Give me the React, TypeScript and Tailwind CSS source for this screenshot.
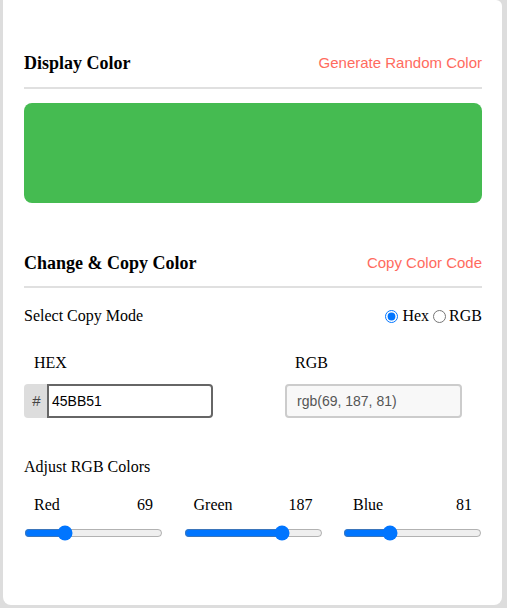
import React from "react";

export default function App() {
  const serif = { fontFamily: '"Liberation Serif", "Times New Roman", serif' };
  return (
    <div className="min-h-[608px] w-[507px] bg-[#dddddd]" style={serif}>
      <div className="mx-[3px] w-[499px] rounded-b-[8px] rounded-tr-[6px] bg-white pb-[64px] pl-[21px] pr-[20px] pt-[52px] text-black">
        <div className="flex items-center justify-between border-b-2 border-[#e0e0e0] pb-[13px]">
          <div className="h-[22px] text-[18px] font-bold leading-[22px]">Display Color</div>
          <div className="text-[15px] leading-[22px] text-[#ff6b5e]" style={{ fontFamily: '"Liberation Sans", Arial, sans-serif' }}>
            Generate Random Color
          </div>
        </div>
        <div className="mt-[14px] h-[100px] rounded-[8px] bg-[#45bb51]" />

        <div className="mt-[49px] flex items-center justify-between border-b-2 border-[#e0e0e0] pb-[12px]">
          <div className="h-[22px] text-[18px] font-bold leading-[22px]">Change &amp; Copy Color</div>
          <div className="text-[15px] leading-[22px] text-[#ff6b5e]" style={{ fontFamily: '"Liberation Sans", Arial, sans-serif' }}>
            Copy Color Code
          </div>
        </div>

        <div className="mt-[18px] flex h-[20px] items-center justify-between text-[16px] leading-[20px]">
          <div>Select Copy Mode</div>
          <div className="flex items-center">
            <input type="radio" name="mode" defaultChecked className="m-0 mr-[4px] h-[13px] w-[13px]" />
            <span>Hex</span>
            <input type="radio" name="mode" className="m-0 ml-[4px] mr-[3px] h-[13px] w-[13px]" />
            <span>RGB</span>
          </div>
        </div>

        <div className="mt-[27px] flex">
          <div className="w-[189px]">
            <div className="h-[20px] pl-[10px] text-[16px] leading-[20px]">HEX</div>
            <div className="mt-[11px] flex h-[34px]">
              <div className="flex w-[23px] items-center justify-center rounded-l-[4px] border-2 border-r-0 border-[#dddddd] bg-[#dddddd] text-[15px] text-[#444]" style={{ fontFamily: '"Liberation Sans", Arial, sans-serif' }}>
                #
              </div>
              <div className="flex flex-1 items-center rounded-r-[4px] border-2 border-[#666] pl-[3px] text-[14px] text-black" style={{ fontFamily: '"Liberation Sans", Arial, sans-serif' }}>
                45BB51
              </div>
            </div>
          </div>
          <div className="ml-[72px] w-[177px]">
            <div className="h-[20px] pl-[10px] text-[16px] leading-[20px]">RGB</div>
            <div className="mt-[11px] flex h-[34px] items-center rounded-[4px] border-2 border-[#cccccc] bg-[#f8f8f8] pl-[10px] text-[14px] text-[#555]" style={{ fontFamily: '"Liberation Sans", Arial, sans-serif' }}>
              rgb(69, 187, 81)
            </div>
          </div>
        </div>

        <div className="mt-[39px] h-[20px] text-[16px] leading-[20px]">Adjust RGB Colors</div>

        <div className="mt-[18px] flex justify-between">
          {[
            { n: "Red", v: 69 },
            { n: "Green", v: 187 },
            { n: "Blue", v: 81 },
          ].map((c) => (
            <div key={c.n} className="w-[139px]">
              <div className="flex h-[20px] justify-between px-[10px] text-[16px] leading-[20px]">
                <span>{c.n}</span>
                <span>{c.v}</span>
              </div>
              <input
                type="range"
                min={0}
                max={255}
                defaultValue={c.v}
                className="m-0 mt-[10px] block h-[16px] w-full"
              />
            </div>
          ))}
        </div>
      </div>
    </div>
  );
}
